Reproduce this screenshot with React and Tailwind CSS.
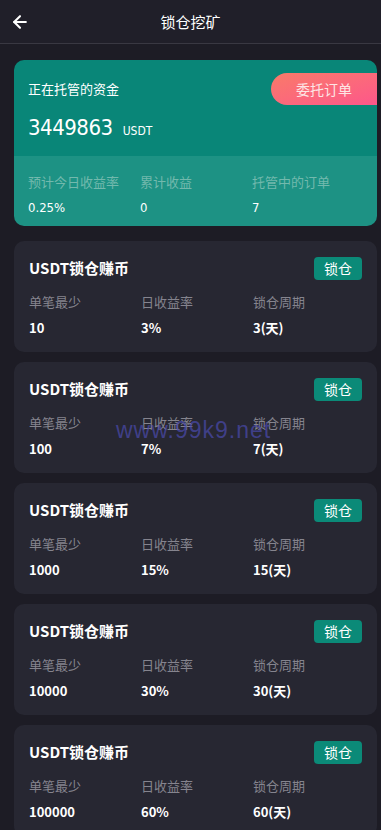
import { ArrowLeft } from 'lucide-react';

const plans = [
  { min: '10', rate: '3%', days: '3' },
  { min: '100', rate: '7%', days: '7' },
  { min: '1000', rate: '15%', days: '15' },
  { min: '10000', rate: '30%', days: '30' },
  { min: '100000', rate: '60%', days: '60' },
];

const font = { fontFamily: '"Noto Sans CJK SC", "Noto Sans", sans-serif' };
const numFont = { fontFamily: '"DejaVu Sans Condensed", Roboto, sans-serif' };

function PlanCard({ plan }) {
  return (
    <div className="bg-[#272732] rounded-[10px] h-[111px] px-[15px] pt-[15px] shrink-0">
      <div className="flex items-center justify-between">
        <div className="text-white text-[15px] font-bold leading-[24px]">USDT锁仓赚币</div>
        <div className="bg-[#0b8a78] text-white text-[14px] leading-[23px] h-[23px] px-[10px] rounded-[4px]">锁仓</div>
      </div>
      <div className="grid grid-cols-[112px_112px_1fr] mt-[12px]">
        <div className="text-[#85848e] text-[13px] leading-[20px]">单笔最少</div>
        <div className="text-[#85848e] text-[13px] leading-[20px]">日收益率</div>
        <div className="text-[#85848e] text-[13px] leading-[20px]">锁仓周期</div>
        <div className="text-white text-[13px] font-bold leading-[20px] mt-[6px]">{plan.min}</div>
        <div className="text-white text-[13px] font-bold leading-[20px] mt-[6px]">{plan.rate}</div>
        <div className="text-white text-[13px] font-bold leading-[20px] mt-[6px]">{plan.days}(天)</div>
      </div>
    </div>
  );
}

export default function App() {
  return (
    <div className="relative w-[381px] h-[830px] overflow-hidden bg-[#1d1c25]" style={font}>
      {/* Header */}
      <div className="h-[44px] bg-[#201f29] border-b border-[#393842] flex items-center relative">
        <ArrowLeft size={20} strokeWidth={2.5} className="text-white ml-[10px]" />
        <div className="absolute inset-x-0 text-center text-white text-[15px] leading-[44px] pointer-events-none">锁仓挖矿</div>
      </div>

      <div className="flex flex-col gap-[10px] pl-[14px] pr-[4px] pt-[16px]">
        {/* Summary card */}
        <div className="rounded-[10px] overflow-hidden h-[166px] shrink-0 mb-[5px]">
          <div className="bg-[#098678] h-[96px] relative pl-[14px] pt-[19px]">
            <div className="text-white text-[13px] leading-[20px]">正在托管的资金</div>
            <div className="flex items-baseline mt-[14px] text-white">
              <span className="text-[22px] leading-[30px] tracking-[-0.5px]" style={numFont}>3449863</span>
              <span className="text-[12px] ml-[10px]" style={numFont}>USDT</span>
            </div>
            <div className="absolute right-0 top-[13px] w-[106px] h-[32px] rounded-l-full bg-gradient-to-br from-[#f97a68] to-[#fd568a] flex items-center justify-center text-[#fde4e4] text-[14px]">
              委托订单
            </div>
          </div>
          <div className="bg-[#1d9284] h-[70px] grid grid-cols-[112px_112px_1fr] pl-[14px] pt-[16px]">
            <div className="text-[#72b9ad] text-[13px] leading-[20px]">预计今日收益率</div>
            <div className="text-[#72b9ad] text-[13px] leading-[20px]">累计收益</div>
            <div className="text-[#72b9ad] text-[13px] leading-[20px]">托管中的订单</div>
            <div className="text-white text-[13px] leading-[20px] -mt-[3px]" style={numFont}>0.25%</div>
            <div className="text-white text-[13px] leading-[20px] -mt-[3px]" style={numFont}>0</div>
            <div className="text-white text-[13px] leading-[20px] -mt-[3px]" style={numFont}>7</div>
          </div>
        </div>

        {plans.map((p) => (
          <PlanCard key={p.min} plan={p} />
        ))}
      </div>

      {/* Watermark */}
      <div
        className="absolute left-[116px] top-[413px] text-[23px] text-[#4b4bb0]/70 pointer-events-none tracking-[1px]"
        style={{ fontFamily: '"Liberation Sans", Arial, sans-serif' }}
      >
        www.99k9.net
      </div>
    </div>
  );
}
